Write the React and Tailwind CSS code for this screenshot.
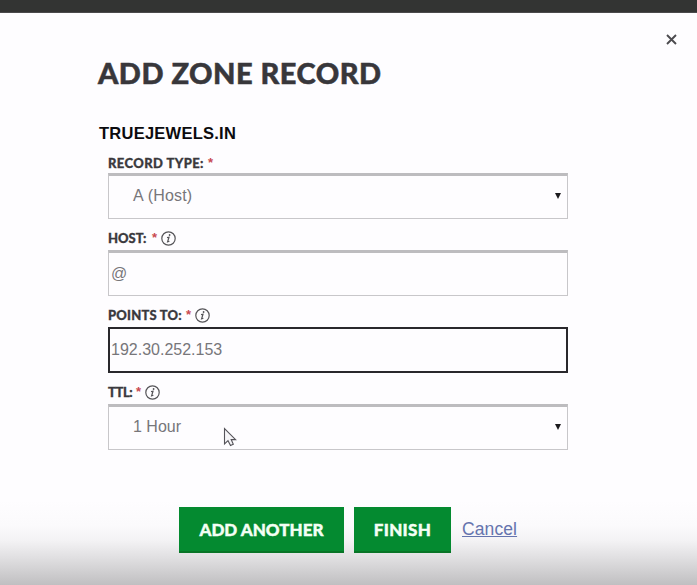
const HEAD = "font-['Lato','Open_Sans',sans-serif]";

function InfoIcon() {
  return (
    <svg width="15" height="15" viewBox="0 0 15 15" fill="none" className="ml-[3px] mt-px shrink-0">
      <circle cx="7.5" cy="7.5" r="6.7" stroke="#555458" strokeWidth="1.2" />
      <circle cx="8.6" cy="4" r="0.9" fill="#555458" />
      <path d="M6 6.6L8 6.2L6.6 10.9L8.4 10.3" stroke="#555458" strokeWidth="1.2" />
    </svg>
  );
}

function Label({ text, width, info, className = "" }) {
  return (
    <div className={`flex items-center whitespace-nowrap text-[13px] leading-[16px] font-black text-[#3a393d] [-webkit-text-stroke:0.3px_#3a393d] ${HEAD} ${info ? "h-[16px] mb-[4px]" : "h-[20px]"}`}>
      <span className={`${width} ${className}`}>{text}</span>
      <span className="ml-[4px] w-[6px] font-['Liberation_Sans',sans-serif] text-[13px] font-bold text-[#c94a50] [-webkit-text-stroke:0px]">*</span>
      {info && <InfoIcon />}
    </div>
  );
}

function Field({ value, select, focused, className = "" }) {
  const border = focused
    ? "border-2 border-[#29282c]"
    : "border border-t-[3px] border-[#c8c7ca] border-t-[#bdbcbf]";
  return (
    <div className={`flex h-[46px] w-[460px] items-center justify-between bg-[#fefdff] font-['Liberation_Sans',Arial,sans-serif] text-[16px] leading-[20px] text-[#77767a] ${border}`}>
      <span className={className}>{value}</span>
      {select && (
        <svg width="6" height="6" viewBox="0 0 6 6" className="mr-[6px] -mt-[2px]">
          <path d="M0 0H6L3 6Z" fill="#1c1b1e" />
        </svg>
      )}
    </div>
  );
}

export default function App() {
  return (
    <div className="relative flex h-[585px] w-[697px] flex-col overflow-hidden bg-[linear-gradient(to_bottom,#fefdff_0px,#fefdff_500px,#fbfafc_525px,#f3f2f4_541px,#e0dfe1_558px,#c0bfc1_585px)]">
      <div className="h-[13px] w-full shrink-0 border-b border-[#4b4a4c] bg-[#333433]" />
      <div className="flex h-[45px] shrink-0 justify-end pr-[20px] pt-[21px]">
        <svg width="11" height="11" viewBox="0 0 11 11">
          <path d="M1 1L10 10M10 1L1 10" stroke="#4c4b4f" strokeWidth="1.9" />
        </svg>
      </div>
      <h1 className={`ml-[98px] h-[30px] whitespace-nowrap text-[29px] leading-[30px] font-black tracking-[0.5px] text-[#38373b] [-webkit-text-stroke:0.5px_#38373b] ${HEAD}`}>
        ADD ZONE RECORD
      </h1>
      <h2 className="ml-[99px] mt-[35px] h-[20px] whitespace-nowrap font-['Liberation_Sans',Arial,sans-serif] text-[16.5px] leading-[20px] font-bold tracking-[0.25px] text-[#0c0b0e]">
        TRUEJEWELS.IN
      </h2>
      <div className="ml-[108px] mt-[10px] flex flex-col gap-[11px]">
        <div>
          <Label text="RECORD TYPE:" width="w-[96px]" className="tracking-[0.4px]" />
          <Field value="A (Host)" select className="ml-[24px] -mt-[3px] tracking-[0.2px]" />
        </div>
        <div>
          <Label text="HOST:" width="w-[40px]" info />
          <Field value="@" className="ml-[2px]" />
        </div>
        <div>
          <Label text="POINTS TO:" width="w-[74px]" className="tracking-[0.2px]" info />
          <Field value="192.30.252.153" focused className="ml-px" />
        </div>
        <div>
          <Label text="TTL:" width="w-[24px]" className="tracking-[-0.4px]" info />
          <Field value="1 Hour" select className="ml-[24px] -mt-[3px]" />
        </div>
      </div>
      <div className={`ml-[179px] mt-[57px] flex h-[46px] items-center whitespace-nowrap text-[17px] font-black text-[#f4fff4] ${HEAD}`}>
        <button className="h-[46px] w-[165px] border-b-2 border-[#087527] bg-[#048a30] pt-px [-webkit-text-stroke:0.4px_#f4fff4]">ADD ANOTHER</button>
        <button className="ml-[10px] h-[46px] w-[97px] border-b-2 border-[#087527] bg-[#048a30] pt-px tracking-[0.3px] [-webkit-text-stroke:0.4px_#f4fff4]">FINISH</button>
        <a className="ml-[11px] -mt-[2px] font-['Liberation_Sans',Arial,sans-serif] text-[17.5px] font-normal tracking-[0.1px] text-[#6574ae] underline">Cancel</a>
      </div>
      <svg width="14" height="20" viewBox="0 0 14 20" className="absolute left-[223px] top-[427px]">
        <path d="M1.5 1.5V17L5 13.7L7.5 18.5L10.3 17.2L8.2 12.6H12.6Z" fill="#f6f5f8" stroke="#55545a" strokeWidth="1.1" />
      </svg>
    </div>
  );
}
